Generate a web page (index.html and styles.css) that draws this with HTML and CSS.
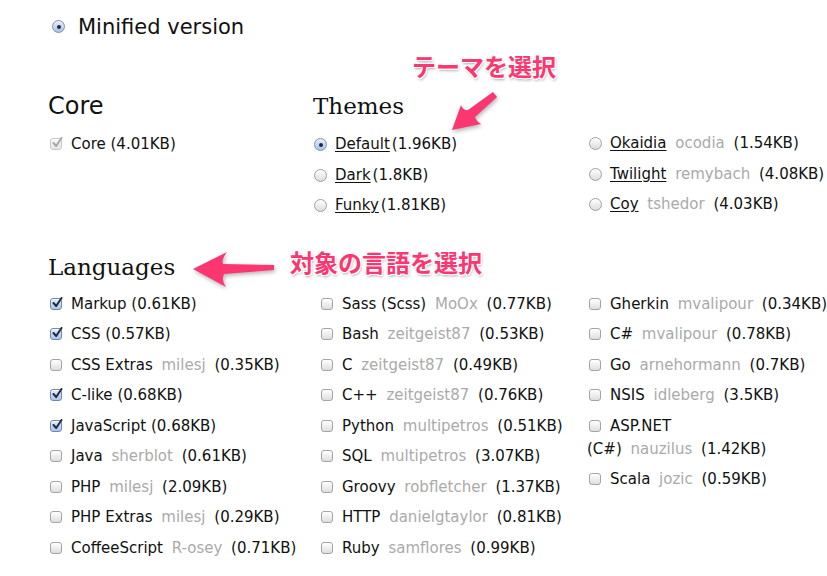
FILE: index.html
```html
<!DOCTYPE html>
<html lang="en">
<head>
  <meta charset="UTF-8">
  <meta name="viewport" content="width=device-width, initial-scale=1.0">
  <title>Download</title>
  <link rel="stylesheet" href="styles.css">
</head>
<body>
  <div class="page">
    <div class="minified"><span class="radio on"></span>Minified version</div>

    <div class="top">
      <section class="core">
        <h2 class="sans">Core</h2>
        <div class="item"><span class="cb checked disabled"><svg viewBox="0 0 12 12"><path d="M2.5 6 L5.2 9 L10.5 1"/></svg></span>Core <span class="size">(4.01KB)</span></div>
      </section>

      <section class="themes">
        <h2>Themes</h2>
        <div class="theme-cols">
          <div>
            <div class="item"><span class="radio on"></span><a href="#">Default</a><span class="size tight">(1.96KB)</span></div>
            <div class="item"><span class="radio"></span><a href="#">Dark</a><span class="size tight">(1.8KB)</span></div>
            <div class="item"><span class="radio"></span><a href="#">Funky</a><span class="size tight">(1.81KB)</span></div>
          </div>
          <div class="shift">
            <div class="item"><span class="radio"></span><a href="#">Okaidia</a> <span class="owner">ocodia</span> <span class="size">(1.54KB)</span></div>
            <div class="item"><span class="radio"></span><a href="#">Twilight</a> <span class="owner">remybach</span> <span class="size">(4.08KB)</span></div>
            <div class="item"><span class="radio"></span><a href="#">Coy</a> <span class="owner">tshedor</span> <span class="size">(4.03KB)</span></div>
          </div>
        </div>
      </section>
    </div>

    <section class="languages">
      <h2>Languages</h2>
      <div class="lang-cols">
        <div>
          <div class="item"><span class="cb checked"><svg viewBox="0 0 12 12"><path d="M2.5 6 L5.2 9 L10.5 1"/></svg></span>Markup <span class="size">(0.61KB)</span></div>
          <div class="item"><span class="cb checked"><svg viewBox="0 0 12 12"><path d="M2.5 6 L5.2 9 L10.5 1"/></svg></span>CSS <span class="size">(0.57KB)</span></div>
          <div class="item"><span class="cb"></span>CSS Extras <span class="owner">milesj</span> <span class="size">(0.35KB)</span></div>
          <div class="item"><span class="cb checked"><svg viewBox="0 0 12 12"><path d="M2.5 6 L5.2 9 L10.5 1"/></svg></span>C-like <span class="size">(0.68KB)</span></div>
          <div class="item"><span class="cb checked"><svg viewBox="0 0 12 12"><path d="M2.5 6 L5.2 9 L10.5 1"/></svg></span>JavaScript <span class="size">(0.68KB)</span></div>
          <div class="item"><span class="cb"></span>Java <span class="owner">sherblot</span> <span class="size">(0.61KB)</span></div>
          <div class="item"><span class="cb"></span>PHP <span class="owner">milesj</span> <span class="size">(2.09KB)</span></div>
          <div class="item"><span class="cb"></span>PHP Extras <span class="owner">milesj</span> <span class="size">(0.29KB)</span></div>
          <div class="item"><span class="cb"></span>CoffeeScript <span class="owner">R-osey</span> <span class="size">(0.71KB)</span></div>
        </div>
        <div>
          <div class="item"><span class="cb"></span>Sass (Scss) <span class="owner">MoOx</span> <span class="size">(0.77KB)</span></div>
          <div class="item"><span class="cb"></span>Bash <span class="owner">zeitgeist87</span> <span class="size">(0.53KB)</span></div>
          <div class="item"><span class="cb"></span>C <span class="owner">zeitgeist87</span> <span class="size">(0.49KB)</span></div>
          <div class="item"><span class="cb"></span>C++ <span class="owner">zeitgeist87</span> <span class="size">(0.76KB)</span></div>
          <div class="item"><span class="cb"></span>Python <span class="owner">multipetros</span> <span class="size">(0.51KB)</span></div>
          <div class="item"><span class="cb"></span>SQL <span class="owner">multipetros</span> <span class="size">(3.07KB)</span></div>
          <div class="item"><span class="cb"></span>Groovy <span class="owner">robfletcher</span> <span class="size">(1.37KB)</span></div>
          <div class="item"><span class="cb"></span>HTTP <span class="owner">danielgtaylor</span> <span class="size">(0.81KB)</span></div>
          <div class="item"><span class="cb"></span>Ruby <span class="owner">samflores</span> <span class="size">(0.99KB)</span></div>
        </div>
        <div>
          <div class="item"><span class="cb"></span>Gherkin <span class="owner">mvalipour</span> <span class="size">(0.34KB)</span></div>
          <div class="item"><span class="cb"></span>C# <span class="owner">mvalipour</span> <span class="size">(0.78KB)</span></div>
          <div class="item"><span class="cb"></span>Go <span class="owner">arnehormann</span> <span class="size">(0.7KB)</span></div>
          <div class="item"><span class="cb"></span>NSIS <span class="owner">idleberg</span> <span class="size">(3.5KB)</span></div>
          <div class="item"><span class="cb"></span>ASP.NET<br>(C#) <span class="owner">nauzilus</span> <span class="size">(1.42KB)</span></div>
          <div class="item"><span class="cb"></span>Scala <span class="owner">jozic</span> <span class="size">(0.59KB)</span></div>
        </div>
      </div>
    </section>

    <!-- annotations -->
    <div class="note note-theme">テーマを選択</div>
    <svg class="arrow arrow-theme" viewBox="440 82 66 56">
      <path d="M452 130 L461 105 Q463 111 468 110 L493 92 L497 97 L475 117 Q476 121 481 124 Z"/>
    </svg>
    <div class="note note-lang">対象の言語を選択</div>
    <svg class="arrow arrow-lang" viewBox="186 246 92 46">
      <path d="M193 269 L227 252 Q221 260 223 264 L274 265 L274 270 L224 274 Q221 280 226 287 Z"/>
    </svg>
  </div>
</body>
</html>
```

FILE: styles.css
```css
body, html {
  margin: 0;
  padding: 0;
  background: #fff;
}

.page {
  position: relative;
  padding: 12px 0 0 48px;
  height: 564px;
  overflow: hidden;
  font-family: "DejaVu Sans", sans-serif;
  font-size: 15px;
  color: #111;
}

.minified {
  font-size: 21px;
  line-height: 30px;
  padding-left: 3px;
}

.minified .radio {
  margin-right: 13px;
  vertical-align: 1px;
}

.top {
  display: flex;
  margin-top: 49px;
}

.core {
  width: 265px;
  flex-shrink: 0;
}

.themes {
  flex-shrink: 0;
}

.themes .theme-cols {
  display: flex;
}

.theme-cols > div {
  width: 275px;
  flex-shrink: 0;
}

h2 {
  font-family: "DejaVu Serif", serif;
  font-weight: normal;
  font-size: 23px;
  line-height: 30px;
  margin: 0 0 12px 0;
}

h2.sans {
  font-family: "DejaVu Sans", sans-serif;
  font-size: 24px;
}

.languages {
  margin-top: 27px;
}

.languages h2 {
  margin-bottom: 11px;
}

.lang-cols {
  display: grid;
  grid-template-columns: 271px 268px 1fr;
}

.item {
  line-height: 23px;
  margin-bottom: 7.5px;
  white-space: nowrap;
}

.item a {
  color: #111;
  text-decoration: underline;
  text-underline-offset: 2px;
}

.size.tight {
  margin-left: 2px;
}

.owner {
  color: #aaa;
  margin: 0 4px;
}

/* checkbox */
.cb {
  display: inline-block;
  position: relative;
  box-sizing: border-box;
  width: 12px;
  height: 12px;
  margin: 0 9px 0 2px;
  vertical-align: -1px;
  border: 1px solid #a4a4a4;
  border-radius: 3px;
  background: linear-gradient(#ffffff, #dedede);
  box-shadow: inset 0 1px 0 #fff;
}

.cb.checked {
  border-color: #7188ad;
  background: linear-gradient(#e6eef9, #abc4e6);
}

.cb svg {
  position: absolute;
  left: 0;
  top: -2px;
  width: 12px;
  height: 12px;
}

.cb svg path {
  fill: none;
  stroke: #1c2a4c;
  stroke-width: 2;
  stroke-linecap: round;
  stroke-linejoin: round;
}

.cb.disabled {
  border-color: #c8c8c8;
  background: linear-gradient(#f8f8f8, #e6e6e6);
}

.cb.disabled svg path {
  stroke: #a8a8a8;
}

/* radio */
.radio {
  display: inline-block;
  position: relative;
  box-sizing: border-box;
  width: 13px;
  height: 13px;
  margin: 0 8px 0 1px;
  vertical-align: -2px;
  border: 1px solid #a0a0a0;
  border-radius: 50%;
  background: linear-gradient(#ffffff, #dcdcdc);
}

.radio.on {
  border-color: #7d92b4;
  background: linear-gradient(#e9f0fa, #a8c2e6);
}

.radio.on::after {
  content: "";
  position: absolute;
  left: 3.5px;
  top: 3.5px;
  width: 4px;
  height: 4px;
  border-radius: 50%;
  background: #1e2a45;
}

.shift .item:first-child {
  margin-top: -1px;
}

/* annotations */
.note {
  position: absolute;
  font-family: "Noto Sans CJK JP", sans-serif;
  font-weight: bold;
  font-size: 24px;
  line-height: 1;
  color: #fb3670;
  white-space: nowrap;
  text-shadow:
    1px 0 0 #fff, -1px 0 0 #fff, 0 1px 0 #fff, 0 -1px 0 #fff,
    1px 1px 0 #fff, -1px -1px 0 #fff, 1px -1px 0 #fff, -1px 1px 0 #fff,
    1px 2px 3px rgba(0, 0, 0, 0.35);
}

.note-theme {
  left: 412px;
  top: 54px;
}

.note-lang {
  left: 290px;
  top: 250px;
}

.arrow {
  position: absolute;
  overflow: visible;
}

.arrow path {
  fill: #fb3670;
  filter: drop-shadow(1px 2px 2px rgba(0, 0, 0, 0.3));
}

.arrow-theme {
  left: 440px;
  top: 82px;
  width: 66px;
  height: 56px;
}

.arrow-lang {
  left: 186px;
  top: 246px;
  width: 92px;
  height: 46px;
}
```
